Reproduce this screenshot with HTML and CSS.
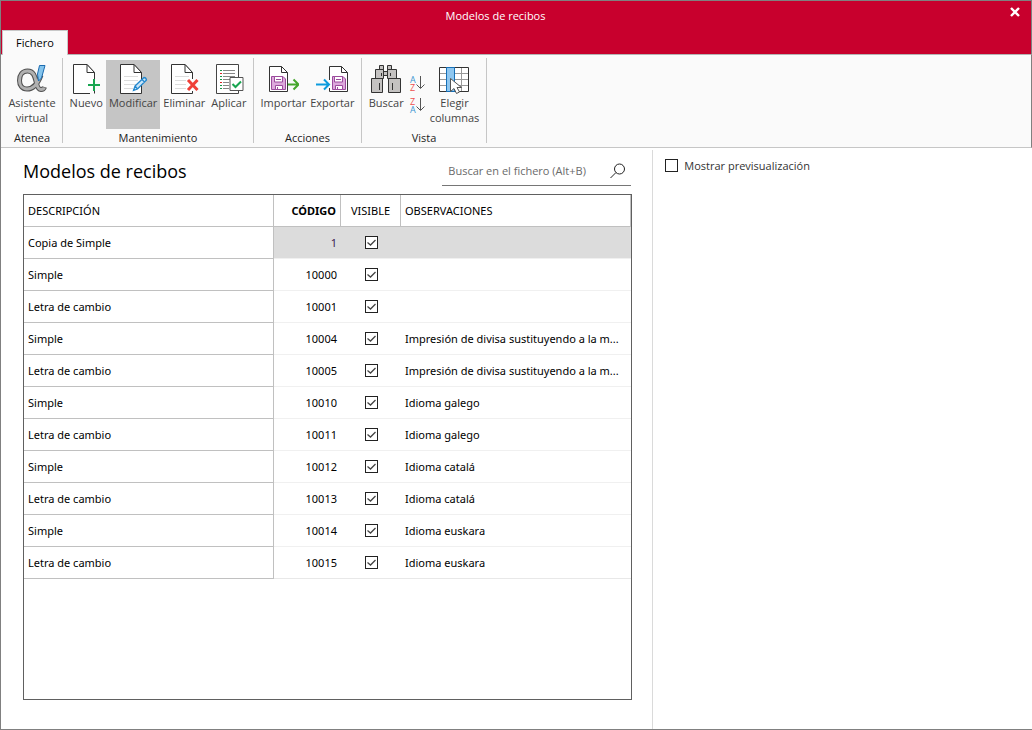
FILE: index.html
```html
<!DOCTYPE html>
<html lang="es">
<head>
<meta charset="utf-8">
<title>Modelos de recibos</title>
<link rel="stylesheet" href="styles.css">
</head>
<body>
<div class="window">
  <header class="titlebar">
    <div class="title-row">
      <h1 class="window-title">Modelos de recibos</h1>
      <button class="close" type="button" aria-label="Cerrar">
        <svg width="10" height="10" viewBox="0 0 10 10"><path d="M1 1l8 8M9 1L1 9" stroke="#fff" stroke-width="2.4" fill="none"/></svg>
      </button>
    </div>
    <nav class="tabs"><button class="tab" type="button">Fichero</button></nav>
  </header>

  <div class="ribbon">
    <section class="group group-atenea">
      <div class="tools">
        <button class="tool" type="button">
          <svg width="32" height="32" viewBox="0 0 32 32" fill="none">
            <path d="M25 12C22 20 18 26 11 26C6 26 3.500 22 3.500 17.500C3.500 12 6.500 8 11.500 8C18 8 19 14 20.500 20C21.500 24.500 23 26.500 25 26.500C27 26.500 28 25.500 28.500 24" stroke="#505050" stroke-width="5"/>
            <path d="M24.500 13C22 20 18 26 11 26C6 26 3.500 22 3.500 17.500C3.500 12 6.500 8 11.500 8C18 8 19 14 20.500 20C21.500 24.500 23 26.500 25 26.500C27 26.500 28 25.500 28.200 24.500" stroke="#b0b0b0" stroke-width="3"/>
            <path d="M23.500 2.500H29L25.500 15L22.500 18L21.500 11z" fill="#85c4ec" stroke="#1b6bb0"/>
          </svg>
          <span>Asistente<br>virtual</span>
        </button>
      </div>
      <h2 class="group-name">Atenea</h2>
    </section>

    <section class="group group-mant">
      <div class="tools">
        <button class="tool" type="button">
          <svg width="32" height="32" viewBox="0 0 32 32" fill="none">
            <path d="M24.500 18V9.500L17 1.500H3.500V30.500H20M24.500 27V30.500" fill="#fff" stroke="#333"/><path d="M17 1.500V9.500H24.500z" fill="#fff" stroke="#333"/>
            <path d="M24 16V28M18 22H30" stroke="#18a550" stroke-width="2"/>
          </svg>
          <span>Nuevo</span>
        </button>
        <button class="tool active" type="button">
          <svg width="32" height="32" viewBox="0 0 32 32" fill="none">
            <path d="M24.500 16V9.500L17 1.500H3.500V30.500H24.500V26z" fill="#fff" stroke="#333"/><path d="M17 1.500V9.500H24.500z" fill="#fff" stroke="#333"/>
            <path d="M7 13.500H21M7 17.500H21M7 21.500H19M7 25.500H16" stroke="#dcdcdc"/>
            <path d="M18 23L27 14.500Q29 14.500 29.500 17L20.500 26L16.500 27.500zM18 23L20.500 26M25 16.500L27.500 19" fill="#c9e5f8" stroke="#2488ce" stroke-width="1.300"/>
          </svg>
          <span>Modificar</span>
        </button>
        <button class="tool" type="button">
          <svg width="32" height="32" viewBox="0 0 32 32" fill="none">
            <path d="M24.500 16V9.500L17 1.500H3.500V30.500H24.500V28" fill="#fff" stroke="#333"/><path d="M17 1.500V9.500H24.500z" fill="#fff" stroke="#333"/>
            <path d="M7 13.500H21M7 17.500H18M7 21.500H18M7 25.500H18" stroke="#dcdcdc"/>
            <path d="M20 17L29.500 27M29.500 17L20 27" stroke="#ef3e36" stroke-width="3"/>
          </svg>
          <span>Eliminar</span>
        </button>
        <button class="tool" type="button">
          <svg width="32" height="32" viewBox="0 0 32 32" fill="none">
            <path d="M3.500 1.500H25.500V30.500H3.500z" fill="#fff" stroke="#444"/>
            <path d="M10 7.500H22M10 10.500H22M10 13.500H22M10 16.500H17M10 19.500H16M10 22.500H16M10 25.500H16" stroke="#888"/>
            <path d="M7 7.500H9M7 13.500H9M7 16.500H9M7 22.500H9M7 25.500H9" stroke="#159447"/>
            <path d="M7 10.500H9M7 19.500H9" stroke="#d22"/>
            <path d="M17 14.500H30V27.500H17z" fill="#fff" stroke="#555"/><path d="M19.500 21L22.500 24L28 18.500" stroke="#18a550" stroke-width="2"/>
          </svg>
          <span>Aplicar</span>
        </button>
      </div>
      <h2 class="group-name">Mantenimiento</h2>
    </section>

    <section class="group group-acc">
      <div class="tools">
        <button class="tool" type="button">
          <svg width="32" height="32" viewBox="0 0 32 32" fill="none">
            <path d="M2.500 3.500H14.500L20.500 9.500V28.500H2.500z" fill="#fff" stroke="#333"/><path d="M14.500 3.500V9.500H20.500" stroke="#333"/>
            <path d="M4.500 13.500H16L18.500 16V26.500H4.500z" fill="#dda9dc" stroke="#9b4b9c"/><path d="M7.500 13.500H15.500V19H7.500zM8.500 22.500H15.500V26.500H8.500z" fill="#fff" stroke="#9b4b9c"/><path d="M9 16.500H14M10.500 24V26" stroke="#9b4b9c"/>
            <path d="M21 21.500H31M26.500 16.500L31.500 21.500L26.500 26.500" stroke="#45a62c" stroke-width="2"/>
          </svg>
          <span>Importar</span>
        </button>
        <button class="tool" type="button">
          <svg width="32" height="32" viewBox="0 0 32 32" fill="none">
            <path d="M13.500 17V3.500H25.500L31.500 9.500V28.500H13.500V25" fill="#fff" stroke="#333"/><path d="M25.500 3.500V9.500H31.500" stroke="#333"/>
            <path d="M16.500 13.500H27L29.500 16V26.500H16.500z" fill="#dda9dc" stroke="#9b4b9c"/><path d="M18.500 13.500H26.500V19H18.500zM19.500 22.500H26.500V26.500H19.500z" fill="#fff" stroke="#9b4b9c"/><path d="M20 16.500H25M21.500 24V26" stroke="#9b4b9c"/>
            <path d="M0 21.500H12.500M8 16.500L13 21.500L8 26.500" stroke="#0c9bdd" stroke-width="2"/>
          </svg>
          <span>Exportar</span>
        </button>
      </div>
      <h2 class="group-name">Acciones</h2>
    </section>

    <section class="group group-vista">
      <div class="tools">
        <button class="tool" type="button">
          <svg width="32" height="32" viewBox="0 0 32 32" fill="#c4c2c1" stroke="#333">
            <path d="M9.500 2.500H13.500V6.500H9.500zM17.500 2.500H21.500V6.500H17.500zM5.500 6.500H13.500V15.500H5.500zM17.500 6.500H26.500V15.500H17.500zM13.500 8.500H17.500V12.500H13.500zM1.500 15.500H12.500V29.500H1.500zM18.500 15.500H30.500V29.500H18.500z"/>
            <path d="M11.500 10V13M20.500 10V13M9.500 20V27M22.500 20V27" fill="none"/>
          </svg>
          <span>Buscar</span>
        </button>
        <div class="sorters">
          <button class="sorter" type="button" aria-label="Orden ascendente">
            <svg width="16" height="20" viewBox="0 0 16 20"><text class="letter blue" x="1" y="9">A</text><text class="letter red" x="1" y="17">Z</text><path d="M11.500 2V14M7.500 10.500L11.500 14.500L15.500 10.500" fill="none" stroke="#555"/></svg>
          </button>
          <button class="sorter" type="button" aria-label="Orden descendente">
            <svg width="16" height="20" viewBox="0 0 16 20"><text class="letter red" x="1" y="9">Z</text><text class="letter blue" x="1" y="17">A</text><path d="M11.500 2V14M7.500 10.500L11.500 14.500L15.500 10.500" fill="none" stroke="#555"/></svg>
          </button>
        </div>
        <button class="tool" type="button">
          <svg width="32" height="32" viewBox="0 0 32 32" fill="none">
            <path d="M1.500 4.500H30.500V28.500H1.500z" fill="#fff"/><path d="M2 10.500H30M2 16.500H30M2 22.500H30M23.500 5V28" stroke="#999"/>
            <path d="M1.500 4.500H30.500V28.500H1.500z" stroke="#333"/>
            <path d="M8.500 4.500H16.500V28.500H8.500z" fill="#8fc7f0" stroke="#1670b8"/>
            <path d="M12.500 15.500V28.500L16 25.500L18.500 30.500L21.500 29L19 24.500H23.500z" fill="#fff" stroke="#555"/>
          </svg>
          <span>Elegir<br>columnas</span>
        </button>
      </div>
      <h2 class="group-name">Vista</h2>
    </section>
  </div>

  <main class="content">
    <section class="list-pane">
      <div class="list-head">
        <h2 class="list-title">Modelos de recibos</h2>
        <div class="search">
          <input class="search-input" type="text" placeholder="Buscar en el fichero (Alt+B)" aria-label="Buscar en el fichero">
          <button class="search-button" type="button" aria-label="Buscar">
            <svg width="16" height="16" viewBox="0 0 16 16" fill="none" stroke="#222"><circle cx="9.500" cy="6" r="5"/><path d="M6 9.500L.5 15"/></svg>
          </button>
        </div>
      </div>
      <div class="grid-box">
        <table class="grid">
          <colgroup><col class="c-desc"><col class="c-code"><col class="c-vis"><col></colgroup>
          <thead><tr><th>DESCRIPCIÓN</th><th class="code">CÓDIGO</th><th class="vis">VISIBLE</th><th>OBSERVACIONES</th></tr></thead>
          <tbody>
            <tr class="selected"><td>Copia de Simple</td><td class="code">1</td><td class="vis"><input class="check" type="checkbox" aria-label="Visible 1" checked></td><td></td></tr>
            <tr><td>Simple</td><td class="code">10000</td><td class="vis"><input class="check" type="checkbox" aria-label="Visible 10000" checked></td><td></td></tr>
            <tr><td>Letra de cambio</td><td class="code">10001</td><td class="vis"><input class="check" type="checkbox" aria-label="Visible 10001" checked></td><td></td></tr>
            <tr><td>Simple</td><td class="code">10004</td><td class="vis"><input class="check" type="checkbox" aria-label="Visible 10004" checked></td><td>Impresión de divisa sustituyendo a la m...</td></tr>
            <tr><td>Letra de cambio</td><td class="code">10005</td><td class="vis"><input class="check" type="checkbox" aria-label="Visible 10005" checked></td><td>Impresión de divisa sustituyendo a la m...</td></tr>
            <tr><td>Simple</td><td class="code">10010</td><td class="vis"><input class="check" type="checkbox" aria-label="Visible 10010" checked></td><td>Idioma galego</td></tr>
            <tr><td>Letra de cambio</td><td class="code">10011</td><td class="vis"><input class="check" type="checkbox" aria-label="Visible 10011" checked></td><td>Idioma galego</td></tr>
            <tr><td>Simple</td><td class="code">10012</td><td class="vis"><input class="check" type="checkbox" aria-label="Visible 10012" checked></td><td>Idioma catalá</td></tr>
            <tr><td>Letra de cambio</td><td class="code">10013</td><td class="vis"><input class="check" type="checkbox" aria-label="Visible 10013" checked></td><td>Idioma catalá</td></tr>
            <tr><td>Simple</td><td class="code">10014</td><td class="vis"><input class="check" type="checkbox" aria-label="Visible 10014" checked></td><td>Idioma euskara</td></tr>
            <tr><td>Letra de cambio</td><td class="code">10015</td><td class="vis"><input class="check" type="checkbox" aria-label="Visible 10015" checked></td><td>Idioma euskara</td></tr>
          </tbody>
        </table>
      </div>
    </section>
    <aside class="preview-pane">
      <label class="preview-option"><input class="check" type="checkbox"><span>Mostrar previsualización</span></label>
    </aside>
  </main>
</div>
</body>
</html>
```
FILE: styles.css
```css
* { box-sizing: border-box; }

body {
  margin: 0;
  font: 11px/15px "Open Sans", "Noto Sans", sans-serif;
  color: #000;
  background: #fff;
}

button, input { font: inherit; color: inherit; border: 0; margin: 0; padding: 0; background: none; }
h1, h2 { margin: 0; font-weight: 400; }
svg { display: block; }

.window {
  min-height: 100vh;
  display: flex;
  flex-direction: column;
  border: 1px solid #808080;
  border-right: 0;
}

.titlebar {
  background: #c8002d;
  border-right: 1px solid #808080;
  border-bottom: 1px solid #b4b4b4;
}
.title-row { display: flex; align-items: flex-start; height: 29px; }
.window-title { flex: 1; padding-top: 7px; font-size: 11px; text-align: center; color: #fff; }
.close { width: 32px; height: 22px; margin-left: 9px; display: grid; place-items: center; }

.tabs { display: flex; height: 24px; padding-left: 1px; }
.tab {
  width: 66px;
  height: 25px;
  padding-bottom: 2px;
  margin-bottom: -1px;
  background: #fafafa;
  border: 1px solid #c8c8c8;
  border-bottom: 0;
}

.ribbon {
  display: flex;
  padding: 3px 0 4px 1px;
  background: #fafafa;
  border-right: 1px solid #808080;
  border-bottom: 1px solid #c6c6c6;
}
.group {
  display: flex;
  flex-direction: column;
  height: 85px;
  padding-top: 2px;
  border-right: 1px solid #c6c6c6;
}
.group-atenea { width: 61px; }
.group-mant { width: 191px; }
.group-acc { width: 108px; }
.group-vista { width: 125px; }
.tools { display: flex; flex-shrink: 0; justify-content: center; height: 69px; }
.group-name { margin-top: 4px; font-size: 11px; line-height: 10px; text-align: center; color: #222; }
.tool {
  display: flex;
  flex-direction: column;
  align-items: center;
  padding: 3px 2px 0;
  color: #444;
  text-align: center;
}
.group-mant .tool { padding: 3px 3px 0; }
.tool.active { background: #c5c5c5; }
.tool span { white-space: nowrap; }
.sorters { display: flex; flex-direction: column; gap: 2px; padding: 14px 3px 0; }
.letter { font: 9px "Open Sans", sans-serif; }
.blue { fill: #3c96d2; }
.red { fill: #ee4f4f; }

.content { flex: 1; display: flex; }
.list-pane {
  flex: 651 1 0;
  min-width: 0;
  display: flex;
  flex-direction: column;
  padding: 9px 20px 29px 22px;
}
.list-head { display: flex; justify-content: space-between; height: 37px; }
.list-title { font-size: 18px; line-height: 29px; }
.search { display: flex; align-items: center; width: 189px; height: 29px; margin-right: 1px; border-bottom: 1px solid #767676; }
.search-input { flex: 1; min-width: 0; padding: 0 0 2px 6px; outline: 0; }
.search-input::placeholder { color: #6a6a6a; opacity: 1; }
.search-button { padding-right: 5px; }

.grid-box { flex: 1; border: 1px solid #606060; }
.grid { width: 100%; table-layout: fixed; border-collapse: separate; border-spacing: 0; font-family: "Noto Sans", "Open Sans", sans-serif; }
.c-desc { width: 250px; }
.c-code { width: 67px; }
.c-vis { width: 60px; }
.grid th, .grid td {
  height: 32px;
  padding: 0 4px;
  font-weight: 400;
  text-align: left;
  white-space: nowrap;
  overflow: hidden;
  text-overflow: ellipsis;
  border-bottom: 1px solid #f0f0f0;
}
.grid th, .grid td:first-child { border-right: 1px solid #c0c0c0; border-bottom-color: #c0c0c0; }
.grid .code { text-align: right; }
.grid th.code { font-weight: 700; }
.grid .vis { text-align: center; }
.grid tr:last-child td:not(:first-child) { border-bottom-color: #e8e8e8; }
.selected td:not(:first-child) { background: #dcdcdc; }
.selected .code { color: #402050; }

.check {
  appearance: none;
  display: block;
  width: 13px;
  height: 13px;
  margin: 0;
  background: #fff;
  border: 1px solid #222;
}
.vis .check { margin: 0 auto; }
.check:checked {
  background: #fff url("data:image/svg+xml,%3Csvg xmlns='http://www.w3.org/2000/svg' viewBox='0 0 11 11'%3E%3Cpath d='M1.500 5.500L4.500 8L9.500 3' fill='none' stroke='%23444' stroke-width='1.300'/%3E%3C/svg%3E");
}

.preview-pane {
  flex: 379 1 0;
  margin-top: 2px;
  padding: 8px 12px;
  border-left: 1px solid #dadada;
}
.preview-option { display: inline-flex; align-items: center; gap: 6px; color: #333; }
```
